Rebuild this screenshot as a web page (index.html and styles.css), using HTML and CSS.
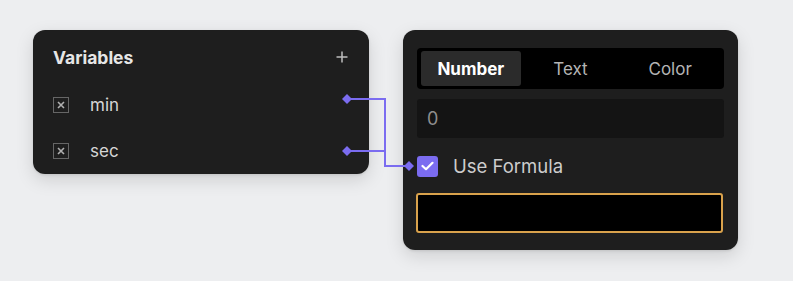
FILE: index.html
```html
<!DOCTYPE html>
<html lang="en">

<head>
    <meta charset="UTF-8">
    <meta name="viewport" content="width=device-width, initial-scale=1.0">
    <title>Variables</title>
    <link rel="stylesheet" href="styles.css">
</head>

<body>
    <div class="canvas">
        <div class="panel vars">
            <div class="vars-head">
                <span class="vars-title">Variables</span>
                <svg class="plus" width="12" height="12" viewBox="0 0 12 12">
                    <path d="M6 0.5V11.5M0.5 6H11.5" stroke="#bdbdbd" stroke-width="1.5" />
                </svg>
            </div>
            <div class="var-row">
                <span class="var-icon">
                    <svg width="10" height="10" viewBox="0 0 10 10">
                        <path d="M2 2L8 8M8 2L2 8" stroke="#b0b0b0" stroke-width="1.6" />
                    </svg>
                </span>
                <span class="var-name">min</span>
            </div>
            <div class="var-row">
                <span class="var-icon">
                    <svg width="10" height="10" viewBox="0 0 10 10">
                        <path d="M2 2L8 8M8 2L2 8" stroke="#b0b0b0" stroke-width="1.6" />
                    </svg>
                </span>
                <span class="var-name">sec</span>
            </div>
        </div>

        <div class="panel props">
            <div class="tabs">
                <div class="tab active">Number</div>
                <div class="tab">Text</div>
                <div class="tab">Color</div>
            </div>
            <div class="value">0</div>
            <div class="check-row">
                <span class="check">
                    <svg width="13" height="10" viewBox="0 0 13 10">
                        <path d="M1.5 5L5 8.2L11.5 1.8" fill="none" stroke="#fff" stroke-width="2.2" stroke-linecap="round" stroke-linejoin="round" />
                    </svg>
                </span>
                <span class="check-label">Use Formula</span>
            </div>
            <div class="formula"></div>
        </div>
    </div>

    <!-- wires between the variable ports and the formula checkbox -->
    <svg class="wires" width="793" height="281" viewBox="0 0 793 281">
        <path d="M347 99H385V166H409M347 151H385" fill="none" stroke="#7b6cf0" stroke-width="2" />
        <path d="M347 94L352 99L347 104L342 99Z" fill="#7b6cf0" />
        <path d="M347 146L352 151L347 156L342 151Z" fill="#7b6cf0" />
        <path d="M409 161L414 166L409 171L404 166Z" fill="#7b6cf0" />
    </svg>
</body>

</html>
```

FILE: styles.css
```css
body {
    margin: 0;
    background-color: #edeef0;
    font-family: Inter, "Noto Sans", sans-serif;
    position: relative;
    height: 281px;
    overflow: hidden;
}

.canvas {
    display: flex;
    align-items: flex-start;
    gap: 34px;
    padding: 30px 0 0 33px;
}

.panel {
    background-color: #1e1e1e;
    border-radius: 12px;
    box-shadow: 0 6px 18px rgba(0, 0, 0, 0.13), 0 1px 3px rgba(0, 0, 0, 0.1);
    box-sizing: border-box;
}

/* left panel */
.vars {
    width: 336px;
    padding: 14px 21px 0 20px;
}

.vars-head {
    height: 26px;
    margin-bottom: 12px;
    display: flex;
    align-items: center;
    justify-content: space-between;
}

.vars-title {
    color: #e6e6e6;
    font-size: 17.5px;
    font-weight: 700;
}

.var-row {
    height: 46px;
    display: flex;
    align-items: center;
    gap: 21px;
}

.var-icon {
    width: 16px;
    height: 16px;
    box-sizing: border-box;
    border: 1.5px solid #666;
    display: flex;
    align-items: center;
    justify-content: center;
}

.var-name {
    color: #d6d6d6;
    font-size: 17px;
}

/* right panel */
.props {
    width: 335px;
    padding: 18px 14px 17px;
}

.tabs {
    height: 41px;
    box-sizing: border-box;
    padding: 3px 4px;
    background-color: #000;
    border-radius: 4px;
    display: grid;
    grid-template-columns: repeat(3, 1fr);
}

.tab {
    display: flex;
    align-items: center;
    justify-content: center;
    color: #b4b4b4;
    font-size: 17px;
    border-radius: 3px;
}

.tab.active {
    background-color: #2b2b2b;
    color: #fff;
    font-weight: 700;
}

.value {
    margin-top: 10px;
    height: 39px;
    background-color: #141414;
    border-radius: 3px;
    padding-left: 10px;
    display: flex;
    align-items: center;
    color: #8e8e8e;
    font-size: 18px;
}

.check-row {
    margin-top: 17px;
    height: 22px;
    display: flex;
    align-items: center;
    gap: 15px;
}

.check {
    width: 21px;
    height: 21px;
    border-radius: 3px;
    background-color: #7b6cf0;
    display: flex;
    align-items: center;
    justify-content: center;
}

.check-label {
    color: #cdcdcd;
    font-size: 18.5px;
}

.formula {
    margin: 16px 1px 0 -1px;
    height: 40px;
    box-sizing: border-box;
    border: 2px solid #d9a24c;
    border-radius: 3px;
    background-color: #000;
}

.wires {
    position: absolute;
    top: 0;
    left: 0;
    pointer-events: none;
}
```
